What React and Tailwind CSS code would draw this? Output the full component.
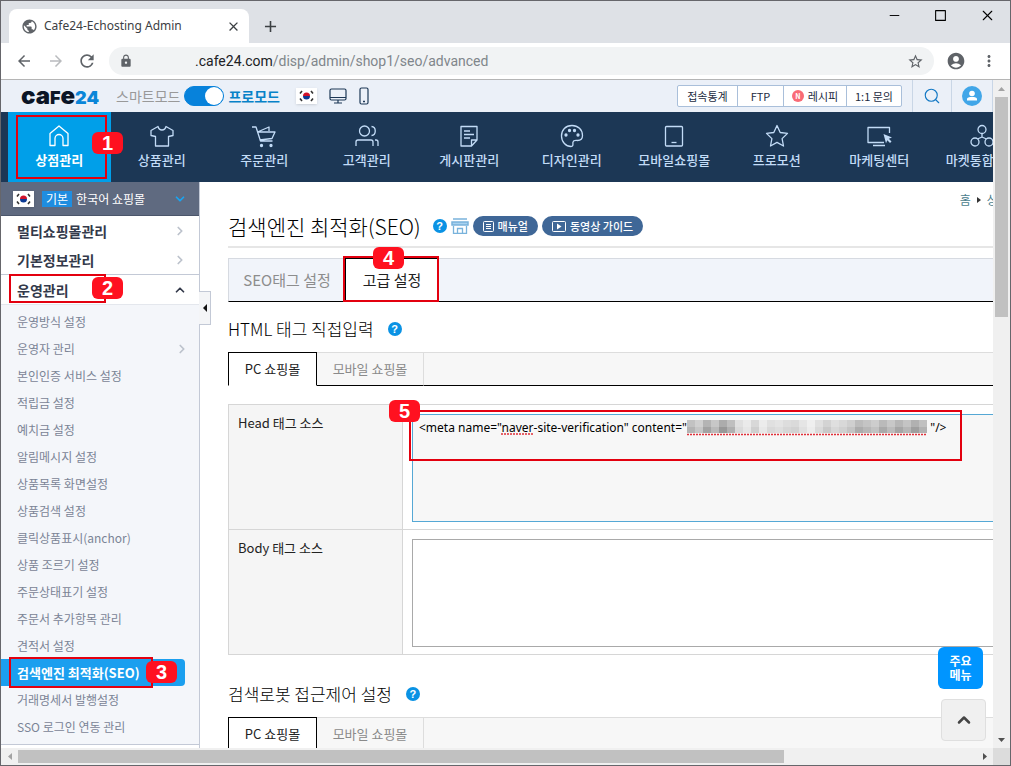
import React from 'react';
import {
  MdPublic, MdClose, MdAdd, MdArrowBack, MdArrowForward, MdRefresh, MdLock,
  MdStarBorder, MdAccountCircle, MdMoreVert,
} from 'react-icons/md';
import { ChevronDown, ChevronRight, ChevronUp, Minus, Search, Square, X } from 'lucide-react';

const NAV_ITEMS = [
  { label: '상점관리', icon: 'home', active: true },
  { label: '상품관리', icon: 'shirt' },
  { label: '주문관리', icon: 'cart' },
  { label: '고객관리', icon: 'users' },
  { label: '게시판관리', icon: 'board' },
  { label: '디자인관리', icon: 'palette' },
  { label: '모바일쇼핑몰', icon: 'mobile' },
  { label: '프로모션', icon: 'star' },
  { label: '마케팅센터', icon: 'marketing' },
  { label: '마켓통합관리', icon: 'market' },
];

const SUB_MENU = [
  { label: '운영방식 설정' },
  { label: '운영자 관리', more: true },
  { label: '본인인증 서비스 설정' },
  { label: '적립금 설정' },
  { label: '예치금 설정' },
  { label: '알림메시지 설정' },
  { label: '상품목록 화면설정' },
  { label: '상품검색 설정' },
  { label: '클릭상품표시(anchor)' },
  { label: '상품 조르기 설정' },
  { label: '주문상태표기 설정' },
  { label: '주문서 추가항목 관리' },
  { label: '견적서 설정' },
  { label: '검색엔진 최적화(SEO)', active: true },
  { label: '거래명세서 발행설정' },
  { label: 'SSO 로그인 연동 관리' },
];

const NAV_PATHS = {
  home: <path d="M3 9.500 12 2l9 7.500V21.500h-5v-7a4 4 0 0 0-8 0v7H3z" />,
  shirt: <path d="M8 2.500 1 6.500v5l4.500 1V22h13v-9.500l4.500-1v-5l-7-4c-.5 2-2 3.500-4 3.500s-3.500-1.500-4-3.500z" />,
  cart: (
    <>
      <path d="M0 3h4l4.500 14h12M5.500 8 17 3v4M5.500 8H23l-3 6.500L7.500 16" />
      <circle cx="9.500" cy="21.500" r="1" fill="currentColor" />
      <circle cx="19" cy="21.500" r="1" fill="currentColor" />
    </>
  ),
  users: (
    <>
      <circle cx="9.500" cy="7" r="5" />
      <path d="M1 22v-4a2 2 0 0 1 2-2h13a2 2 0 0 1 2 2v4M16.500 2.500c5 .5 5 8.500 0 9M20 16h1a2 2 0 0 1 2 2v4" />
    </>
  ),
  board: (
    <>
      <path d="M4 2.500h16V16l-5.500 6H4zM20 16h-5.500v6" />
      <path d="M7 7h6M7 10.500h10M7 14h6" />
    </>
  ),
  palette: (
    <>
      <path d="M12 1.500C5.500 1.500 1.500 6 1.500 12S6 22.500 11 22.500c3 0 1.500-3 2-4.500.5-2 2.500-1.500 4.500-1.500 3 0 5-1.500 5-5 0-6-4.500-10-10.500-10z" />
      <circle cx="6" cy="11" r="1" fill="currentColor" />
      <circle cx="9.500" cy="6.500" r="1" fill="currentColor" />
      <circle cx="14.500" cy="6.500" r="1" fill="currentColor" />
      <circle cx="18" cy="11" r="1" fill="currentColor" />
    </>
  ),
  mobile: (
    <>
      <rect x="3.500" y="2.500" width="17" height="19.500" rx="1" />
      <path d="M9.500 18.500h5" />
    </>
  ),
  star: <path d="m12 1.500 3.200 7 7.300.9-5.400 5.200 1.400 7.400L12 18.400 5.500 22l1.400-7.400L1.500 9.400l7.300-.9z" />,
  marketing: (
    <>
      <path d="M22.500 9V3.500H1v15h16M6 21.500h12" />
      <path d="m16.500 10 8.500 3.500-3.200 1.200 2.700 2.800-1.500 1.500-2.700-2.800-1.300 3z" fill="currentColor" stroke="none" />
    </>
  ),
  market: (
    <>
      <circle cx="12" cy="5.500" r="4" />
      <circle cx="5" cy="18" r="4" />
      <circle cx="19" cy="18" r="4" />
      <path d="M12 9.500V13l-4.500 2M12 13l4.500 2" />
    </>
  ),
};

const NavIcon = ({ name }) => (
  <svg viewBox="0 0 24 24" className="w-6 h-6 overflow-visible" fill="none" stroke="currentColor" strokeWidth="1.3" strokeLinejoin="round">
    {NAV_PATHS[name]}
  </svg>
);

const Flag = () => (
  <svg viewBox="0 0 21 16" className="w-[21px] h-4 shrink-0 shadow-sm" aria-hidden="true">
    <rect width="21" height="16" fill="#fff" />
    <path d="M7 8a3.500 3.500 0 0 1 7 0z" fill="#d0112b" />
    <path d="M7 8a3.500 3.500 0 0 0 7 0z" fill="#0b3a94" />
    <g stroke="#333" strokeWidth="1.600">
      <path d="m4 5.500 2-2.500M15 3l2 2.500M4 10.500 6 13M15 13l2-2.500" />
    </g>
  </svg>
);

// Red frame with its step number, laid over the spot it points to
const Callout = ({ step, frame, badge }) => (
  <>
    <span className={`absolute z-10 border-2 border-[#e3000f] pointer-events-none ${frame}`} />
    <span className={`absolute z-20 flex items-center justify-center w-[31px] h-[22px] rounded-md bg-[#ff1120] text-white font-bold text-xl leading-none font-['Liberation_Sans',sans-serif] pointer-events-none ${badge}`}>
      {step}
    </span>
  </>
);

const HelpIcon = () => (
  <button type="button" aria-label="도움말" className="flex items-center justify-center w-3.5 h-3.5 rounded-full bg-[#0a92e4] text-white text-[11px] font-bold leading-none font-['Liberation_Sans',sans-serif]">
    ?
  </button>
);

const TitleBar = () => (
  <div className="flex h-[42px] shrink-0 bg-[#dee1e6] text-[#3c4043]">
    <div className="flex items-center w-60 mt-2 ml-2 pl-3 pr-2 rounded-t-lg bg-white">
      <MdPublic size={17} className="text-[#5f6368]" />
      <span className="ml-1.5 flex-1 text-xs font-['Noto_Sans',sans-serif]">Cafe24-Echosting Admin</span>
      <button type="button" aria-label="Close tab"><MdClose size={15} /></button>
    </div>
    <button type="button" aria-label="New tab" className="ml-3 mt-2"><MdAdd size={19} /></button>
    <div className="flex ml-auto pr-3.5 gap-8 h-7 items-center text-black">
      <button type="button" aria-label="Minimize"><Minus size={15} strokeWidth={1.500} /></button>
      <button type="button" aria-label="Maximize"><Square size={13} strokeWidth={2} className="[&_rect]:[rx:0]" /></button>
      <button type="button" aria-label="Close"><X size={17} strokeWidth={1.500} /></button>
    </div>
  </div>
);

const AddressBar = () => (
  <div className="flex items-center h-[37px] shrink-0 pl-3.5 pr-3 bg-white border-b border-[#b5b5b5] text-[#5f6368]">
    <button type="button" aria-label="Back"><MdArrowBack size={18} /></button>
    <button type="button" aria-label="Forward" className="ml-3.5 text-[#b9bbbe]"><MdArrowForward size={18} /></button>
    <button type="button" aria-label="Reload" className="ml-3"><MdRefresh size={20} /></button>
    <div className="flex items-center flex-1 h-7 ml-3 px-2.5 rounded-full bg-[#f1f3f4]">
      <MdLock size={14} />
      <p className="flex-1 pl-[62px] text-sm font-['Roboto',sans-serif] text-[#80868b]">
        <span className="text-[#202124]">.cafe24.com</span>/disp/admin/shop1/seo/advanced
      </p>
      <button type="button" aria-label="Bookmark"><MdStarBorder size={17} /></button>
    </div>
    <button type="button" aria-label="Account" className="ml-3"><MdAccountCircle size={20} /></button>
    <button type="button" aria-label="Menu" className="ml-3.5"><MdMoreVert size={18} /></button>
  </div>
);

const TopBar = () => (
  <div className="flex items-center h-8 pl-5 bg-[#ebf0f8]">
    <a href="#home" className="flex items-baseline w-[81px] font-black leading-none font-['Inter',sans-serif] text-[#0b1526]">
      <span className="text-2xl leading-none">ca</span>
      <span className="text-lg leading-none">F</span>
      <span className="text-2xl leading-none">e</span>
      <span className="text-lg leading-none text-[#0a86d8]">24</span>
    </a>
    <label className="flex items-center ml-3.5 text-sm text-[#999]">
      스마트모드
      <input type="checkbox" defaultChecked className="peer sr-only" />
      <span className="flex justify-end w-10 h-5 mx-1 rounded-full bg-[#0782db] border border-[#0782db]">
        <span className="w-[18px] h-[18px] rounded-full bg-white" />
      </span>
      <span className="font-bold text-[#0782c8]">프로모드</span>
    </label>
    <div className="flex items-center gap-3 ml-4 text-[#1c3755]">
      <Flag />
      <svg viewBox="0 0 18 16" className="w-[18px] h-4" fill="none" stroke="currentColor" strokeWidth="1.200">
        <rect x="1" y="1" width="16" height="11" rx="1.500" />
        <path d="M1 9.500h16M9 12v3M5 15h8" />
      </svg>
      <svg viewBox="0 0 10 18" className="w-2.5 h-[18px]" fill="none" stroke="currentColor" strokeWidth="1.200">
        <rect x="1" y="1" width="8" height="16" rx="1.500" />
        <path d="M4 14.500h2" strokeWidth="1.500" />
      </svg>
    </div>
    <div className="flex ml-auto mr-2.5 h-[22px] border border-[#a9bfda] divide-x divide-[#a9bfda] rounded-xs bg-white text-[11px] text-[#1c2b41]">
      <button type="button" className="w-15">접속통계</button>
      <button type="button" className="w-[46px]">FTP</button>
      <button type="button" className="flex items-center justify-center gap-1 w-[63px]">
        <span className="flex items-center justify-center w-3 h-3 rounded-full bg-[#f96b76] text-white text-[7px] font-bold leading-none">N</span>
        레시피
      </button>
      <button type="button" className="w-[54px]">1:1 문의</button>
    </div>
    <button type="button" aria-label="검색" className="flex items-center justify-center w-[39px] h-full border-l border-[#c9d6e6] text-[#1177c4]">
      <Search size={18} strokeWidth={1.500} />
    </button>
    <button type="button" aria-label="내 정보" className="flex items-center justify-center w-[42px] h-full border-x border-[#c9d6e6]">
      <svg viewBox="0 0 20 20" className="w-5 h-5">
        <circle cx="10" cy="10" r="10" fill="#41a6e8" />
        <circle cx="10" cy="7.500" r="2.800" fill="#fff" />
        <path d="M5 14.500v-1.500c0-1.500 2-2 5-2s5 .5 5 2v1.500z" fill="#fff" />
      </svg>
    </button>
  </div>
);

const MainNav = () => (
  <nav className="h-[70px] pl-[7px] bg-[#1c3755]">
    <ul className="grid grid-cols-10 h-full">
      {NAV_ITEMS.map((item) => (
        <li key={item.label} className="relative">
          <a
            href="#nav"
            className={`flex flex-col items-center h-full pt-3 text-[13px] leading-5 whitespace-nowrap ${
              item.active ? 'bg-[#009fe9] text-white font-bold' : 'text-[#c3dcf7] font-medium'
            }`}
          >
            <NavIcon name={item.icon} />
            <span className="mt-0.5">{item.label}</span>
          </a>
          {item.active && <Callout step={1} frame="left-2 top-[3px] w-[91px] h-16" badge="left-[84px] top-5" />}
        </li>
      ))}
    </ul>
  </nav>
);

const Sidebar = () => (
  <aside className="relative w-[199px] shrink-0 bg-white border-r border-[#c3c9d6]">
    <button type="button" className="flex items-center w-full h-[34px] px-3 bg-[#5f6a80] border-b border-[#4b566b] text-xs text-white">
      <Flag />
      <span className="ml-2 mr-1 px-1 leading-4 bg-[#1f8de0]">기본</span>
      한국어 쇼핑몰
      <ChevronDown size={14} className="ml-auto text-[#19a5f2] stroke-3" />
    </button>
    <ul className="text-sm font-bold text-[#33394a]">
      <li>
        <a href="#multi" className="flex items-center justify-between h-[29px] pl-4 pr-3">
          멀티쇼핑몰관리
          <ChevronRight size={14} className="text-[#bcc2cc] stroke-3" />
        </a>
      </li>
      <li>
        <a href="#info" className="flex items-center justify-between h-[29px] pl-4 pr-3">
          기본정보관리
          <ChevronRight size={14} className="text-[#bcc2cc] stroke-3" />
        </a>
      </li>
      <li className="relative">
        <a href="#operate" className="flex items-center justify-between h-[30px] pl-4 pr-3 border-t border-[#c3c9d6]">
          운영관리
          <ChevronUp size={14} className="stroke-3" />
        </a>
        <Callout step={2} frame="left-2 top-0 w-[97px] h-[29px]" badge="left-[91px] top-[3px]" />
      </li>
    </ul>
    <ul className="pt-[3px] pb-1 bg-[#f4f6fa] border-t border-b border-t-[#e4e7ed] border-b-[#c3c9d6] text-xs text-[#7b8496]">
      {SUB_MENU.map((item) => (
        <li key={item.label} className="relative">
          <a
            href="#sub"
            className={`flex items-center justify-between h-[27px] pl-4 pr-2.5 ${
              item.active ? 'mr-3.5 rounded-r-sm bg-[#1b9fef] text-[13px] font-bold text-white' : ''
            }`}
          >
            {item.label}
            {item.more && <ChevronRight size={14} className="text-[#bcc2cc] stroke-3" />}
          </a>
          {item.active && <Callout step={3} frame="left-2 -top-0.5 w-36 h-[31px]" badge="left-[145px] top-0.5" />}
        </li>
      ))}
    </ul>
    <button type="button" aria-label="메뉴 접기" className="absolute left-[198px] top-[109px] flex items-center justify-center w-3 h-[34px] bg-[#f4f5f7] border border-l-0 border-[#c3c9d6]">
      <svg viewBox="0 0 4 8" className="w-1 h-2"><path d="M4 0v8L0 4z" fill="#111" /></svg>
    </button>
  </aside>
);

const DeviceTabs = () => (
  <div className="flex h-[34px] text-[13px]" role="tablist">
    <button type="button" role="tab" aria-selected="true" className="w-[89px] bg-white border border-black border-b-white">PC 쇼핑몰</button>
    <button type="button" role="tab" aria-selected="false" className="w-[107px] bg-[#f7f7f7] border-t border-r border-b border-[#ddd] border-b-black text-[#8a8a8a]">모바일 쇼핑몰</button>
    <div className="flex-1 bg-[#f7f7f7] border-t border-b border-t-[#ddd] border-b-black" />
  </div>
);

const SectionTitle = ({ children }) => (
  <div className="flex items-center gap-3.5 h-[50px] pt-1">
    <h2 className="text-[17px] font-light text-black">{children}</h2>
    <HelpIcon />
  </div>
);

// Masked verification code: one shade per 8px block
const MASK = [
  '#b4b4b4', '#c6c6c6', '#a3a3a3', '#bababa', '#989898', '#b0b0b0', '#dadada', '#e6e6e6', '#cfcfcf', '#e8e8e8',
  '#d9d9d9', '#dedede', '#d6d6d6', '#d2d2d2', '#e0e0e0', '#ececec', '#dadada', '#c9c9c9', '#d8d8d8', '#d0d0d0', '#c4c4c4',
  '#acacac', '#b7b7b7', '#c2c2c2', '#aaaaaa', '#bcbcbc', '#a6a6a6', '#b6b6b6', '#9f9f9f', '#b2b2b2',
];

const MaskedCode = () => (
  <svg viewBox="0 0 240 16" className="absolute left-[284px] top-[15px] w-60 h-4 pointer-events-none" aria-hidden="true">
    {MASK.map((shade, i) => (
      <React.Fragment key={i}>
        <rect x={i * 8} y="0" width="8" height="7" fill={shade} opacity="0.8" />
        <rect x={i * 8} y="7" width="8" height="6" fill={shade} />
      </React.Fragment>
    ))}
    <path d="M0 14.500h240" stroke="#e0303a" strokeWidth="1.500" strokeDasharray="2 1" />
  </svg>
);

const HEAD_SOURCE = `<meta name="naver-site-verification" content="${' '.repeat(78)}"/>`;

const SourceTable = () => (
  <table className="w-full mt-[18px] border-separate border-spacing-0 border-t border-l border-[#d6d6d6] text-[13px]">
    <tbody>
      <tr>
        <th scope="row" className="w-[174px] pt-2 pl-[9px] bg-[#f5f5f5] border-r border-b border-[#d6d6d6] text-left align-top font-normal">
          <label htmlFor="head-source">Head 태그 소스</label>
        </th>
        <td className="relative pt-[9px] pb-[7px] pl-[9px] border-b border-[#d6d6d6]">
          <textarea
            id="head-source"
            spellCheck={false}
            defaultValue={HEAD_SOURCE}
            className="block w-full h-[108px] px-1.5 py-[5px] bg-[#f7f7f7] border border-[#55a8d5] resize-none outline-none text-xs leading-4 text-black font-['Noto_Sans',sans-serif]"
          />
          <MaskedCode />
          <svg viewBox="0 0 32 2" className="absolute left-[98px] top-7 w-8 h-0.5 pointer-events-none" aria-hidden="true">
            <path d="M0 1h32" stroke="#e0303a" strokeWidth="1.500" strokeDasharray="2 1" />
          </svg>
          <Callout step={5} frame="left-1.5 top-[5px] w-[553px] h-[51px]" badge="-left-3.5 -top-[5px]" />
        </td>
      </tr>
      <tr>
        <th scope="row" className="pt-2 pl-[9px] bg-[#f5f5f5] border-r border-b border-[#d6d6d6] text-left align-top font-normal">
          <label htmlFor="body-source">Body 태그 소스</label>
        </th>
        <td className="pt-[9px] pb-[7px] pl-[9px] border-b border-[#d6d6d6]">
          <textarea id="body-source" className="block w-full h-[108px] bg-white border border-[#a9a9a9] resize-none outline-none" />
        </td>
      </tr>
    </tbody>
  </table>
);

const Content = () => (
  <main className="flex-1 min-w-0 pl-7 bg-white text-[#222]">
    <div className="flex items-center justify-end gap-1.5 h-8 pt-1 pr-0.5 text-xs text-[#4a7d8c]">
      <a href="#home">홈</a>
      <svg viewBox="0 0 4 6" className="w-1 h-1.5"><path d="M0 0v6l4-3z" fill="#333" /></svg>
      <a href="#shop">상점관리</a>
    </div>
    <div className="flex items-center h-[34px] pb-2 border-b-2 border-[#e6e6e6]">
      <h1 className="mr-3 text-[21px] leading-6 font-light text-black">검색엔진 최적화(SEO)</h1>
      <HelpIcon />
      <svg viewBox="0 0 18 16" className="w-[18px] h-4 ml-1" fill="none" stroke="#79b3dc">
        <path d="M2 1h14M1 4h16v3H1z" fill="#a9d2ef" strokeWidth="1.500" />
        <path d="M2.500 8v7.500h13V8M6.500 15v-4.500h5V15" strokeWidth="1.300" />
      </svg>
      <button type="button" className="flex items-center gap-1 h-5 ml-1 px-2.5 rounded-full bg-[#3f6797] text-[11px] font-medium text-white">
        <svg viewBox="0 0 11 11" className="w-[11px] h-[11px]" fill="none" stroke="currentColor">
          <rect x=".5" y=".5" width="10" height="10" rx="1" />
          <path d="M3 3.500h5M3 5.500h5M3 7.500h5" />
        </svg>
        매뉴얼
      </button>
      <button type="button" className="flex items-center gap-1 h-5 ml-1 px-2.5 rounded-full bg-[#3f6797] text-[11px] font-medium text-white">
        <svg viewBox="0 0 14 11" className="w-3.5 h-[11px]" fill="none" stroke="currentColor">
          <rect x=".5" y=".5" width="13" height="10" rx="1" />
          <path d="M5 2.500v6l4.500-3z" fill="currentColor" stroke="none" />
        </svg>
        동영상 가이드
      </button>
    </div>
    <div className="flex h-11 mt-2.5 text-[15px]" role="tablist">
      <button type="button" role="tab" aria-selected="false" className="w-[117px] bg-[#f1f4fa] border border-[#d6dae1] border-r-0 border-b-black text-[#8d8d8d]">SEO태그 설정</button>
      <div className="relative w-[94px]">
        <button type="button" role="tab" aria-selected="true" className="w-full h-full bg-white border border-black border-b-white">고급 설정</button>
        <Callout step={4} frame="-left-0.5 -top-0.5 w-24 h-[46px]" badge="left-7 -top-[11px]" />
      </div>
      <div className="flex-1 bg-[#f1f4fa] border-t border-b border-t-[#d6dae1] border-b-black" />
    </div>
    <SectionTitle>HTML 태그 직접입력</SectionTitle>
    <DeviceTabs />
    <SourceTable />
    <div className="mt-3">
      <SectionTitle>검색로봇 접근제어 설정</SectionTitle>
      <DeviceTabs />
    </div>
  </main>
);

const FloatingButtons = () => (
  <div className="absolute right-[7px] bottom-[7px] flex flex-col gap-2.5">
    <button type="button" className="w-[45px] h-[42px] mr-[3px] rounded-md bg-[#0095ff] text-xs leading-[14px] font-bold text-white">
      주요<br />메뉴
    </button>
    <button type="button" aria-label="맨 위로" className="flex items-center justify-center w-[45px] h-[42px] ml-[3px] rounded-sm bg-[#f0f0f0] border border-[#dfdfdf] text-[#444]">
      <ChevronUp size={20} className="stroke-3" />
    </button>
  </div>
);

const VerticalScroll = () => (
  <div className="flex flex-col items-center w-[17px] shrink-0 bg-[#f0f0f0]">
    <svg viewBox="0 0 17 17" className="w-[17px] h-[17px]"><path d="M5 11h7L8.500 7z" fill="#a3a3a3" /></svg>
    <div className="w-[13px] h-[33%] bg-[#c1c1c1]" />
    <svg viewBox="0 0 17 17" className="w-[17px] h-[17px] mt-auto"><path d="M5 7h7l-3.500 4z" fill="#505050" /></svg>
  </div>
);

const HorizontalScroll = () => (
  <div className="flex items-center h-[17px] shrink-0 bg-[#f0f0f0]">
    <svg viewBox="0 0 17 17" className="w-[17px] h-[17px]"><path d="M11 5v7L7 8.500z" fill="#a3a3a3" /></svg>
    <div className="flex-1"><div className="w-4/5 h-[13px] bg-[#c1c1c1]" /></div>
    <svg viewBox="0 0 17 17" className="w-[17px] h-[17px]"><path d="M7 5v7l4-3.500z" fill="#505050" /></svg>
    <div className="w-[17px] h-full bg-[#dcdcdc]" />
  </div>
);

export default function App() {
  return (
    <div className="flex flex-col h-screen overflow-hidden border border-[#66666b] bg-white font-['Noto_Sans_CJK_KR',sans-serif]">
      <TitleBar />
      <AddressBar />
      <div className="flex flex-1 min-h-0">
        <div className="relative flex-1 min-w-0 overflow-hidden">
          <TopBar />
          <div className="min-w-[1032px]">
            <MainNav />
            <div className="flex">
              <Sidebar />
              <Content />
            </div>
          </div>
          <FloatingButtons />
        </div>
        <VerticalScroll />
      </div>
      <HorizontalScroll />
    </div>
  );
}
